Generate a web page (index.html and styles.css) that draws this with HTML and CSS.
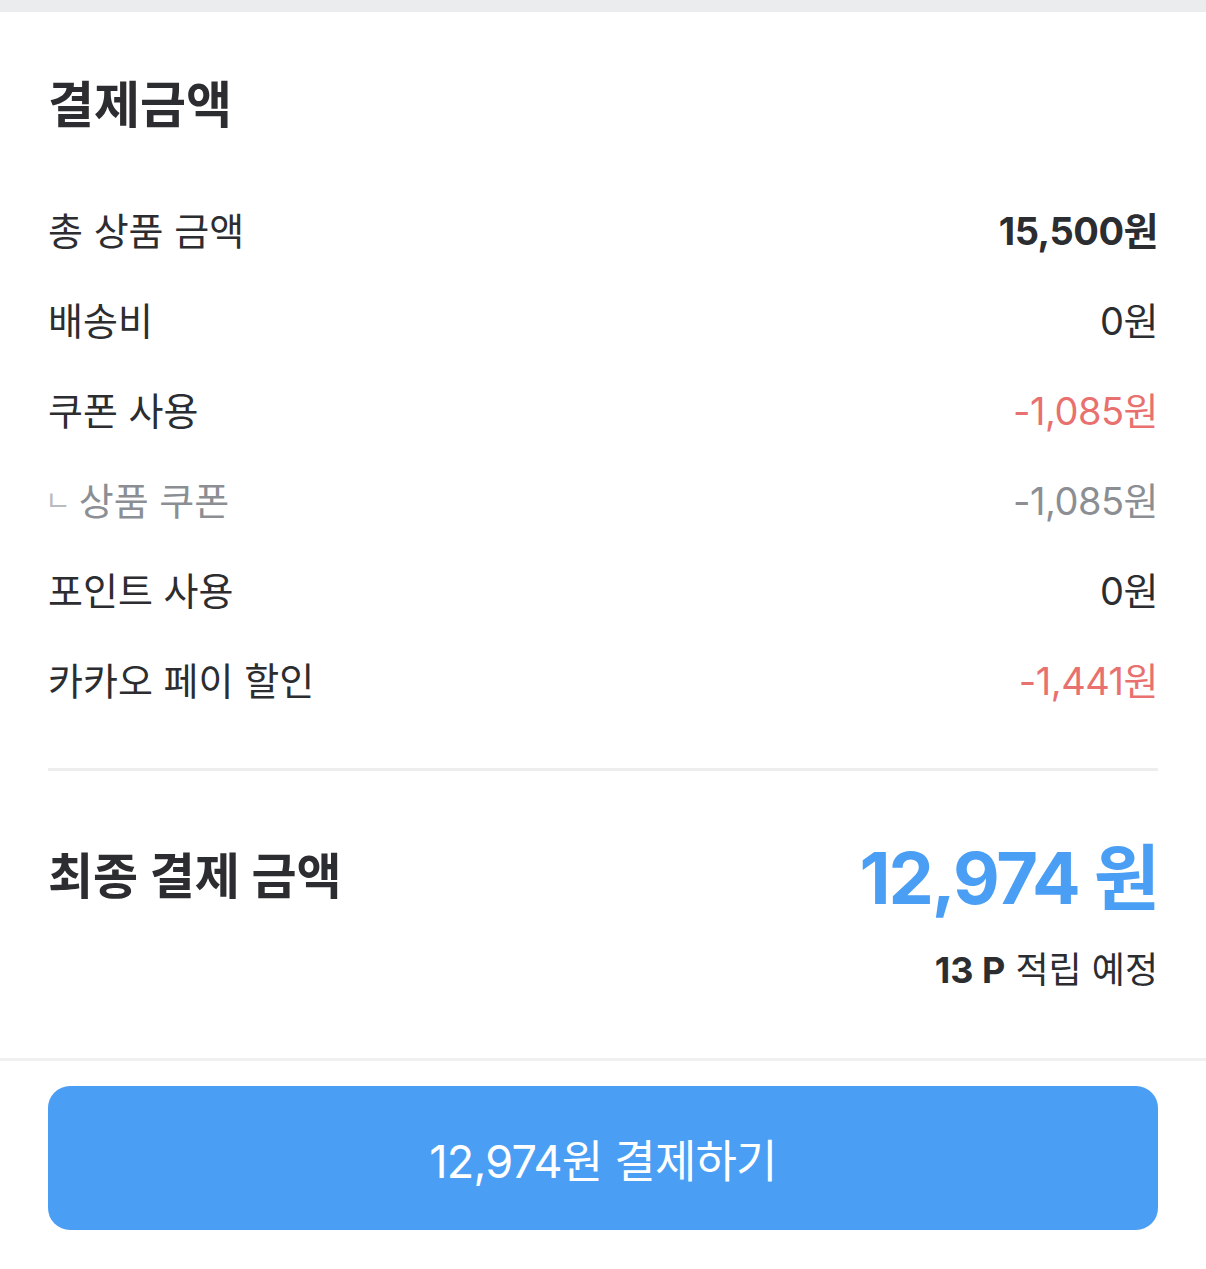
FILE: index.html
```html
<!DOCTYPE html>
<html lang="ko">
<head>
    <meta charset="UTF-8">
    <meta name="viewport" content="width=device-width, initial-scale=1.0">
    <title>결제금액</title>
    <link rel="stylesheet" href="styles.css">
</head>
<body>

    <div class="top-bar"></div>

    <div class="payment">
        <h2 class="payment-title">결제금액</h2>

        <div class="rows">
            <div class="row">
                <span class="label">총 상품 금액</span>
                <span class="value bold">15,500원</span>
            </div>
            <div class="row">
                <span class="label">배송비</span>
                <span class="value">0원</span>
            </div>
            <div class="row">
                <span class="label">쿠폰 사용</span>
                <span class="value minus">-1,085원</span>
            </div>
            <div class="row sub">
                <span class="label"><span class="corner">ㄴ</span>상품 쿠폰</span>
                <span class="value">-1,085원</span>
            </div>
            <div class="row">
                <span class="label">포인트 사용</span>
                <span class="value">0원</span>
            </div>
            <div class="row">
                <span class="label">카카오 페이 할인</span>
                <span class="value minus">-1,441원</span>
            </div>
        </div>

        <div class="divider"></div>

        <div class="total">
            <span class="total-label">최종 결제 금액</span>
            <span class="total-price">12,974 원</span>
        </div>
        <div class="points"><b>13 P</b> 적립 예정</div>
    </div>

    <div class="footer">
        <button type="button" class="pay-btn">12,974원 결제하기</button>
    </div>

</body>
</html>
```

FILE: styles.css
```css
body {
    margin: 0;
    background: #fff;
    font-family: "Inter", "Noto Sans CJK KR", sans-serif;
    color: #2c2d30;
}

.top-bar {
    height: 12px;
    background-color: #ebecee;
}

.payment {
    padding: 0 48px;
}

.payment-title {
    margin: 0;
    padding-top: 58px;
    height: 70px;
    line-height: 70px;
    font-size: 50px;
    font-weight: 700;
}

.rows {
    margin-top: 43px;
}

.row {
    display: flex;
    justify-content: space-between;
    align-items: center;
    height: 90px;
    font-size: 38px;
}

.row .value {
    letter-spacing: -0.5px;
}

.row .bold {
    font-weight: 700;
}

.row .minus {
    color: #e8716f;
}

.row.sub {
    color: #8b8e93;
}

.corner {
    font-size: 28px;
    color: #b9bbbf;
    margin-right: 8px;
    margin-left: -3px;
    vertical-align: 4px;
}

.divider {
    margin-top: 45px;
    height: 3px;
    background-color: #ededed;
}

.total {
    display: flex;
    justify-content: space-between;
    align-items: center;
    margin-top: 56px;
    height: 90px;
}

.total-label {
    font-size: 49px;
    font-weight: 700;
}

.total-price {
    font-size: 72px;
    font-weight: 700;
    color: #4a9ff5;
    letter-spacing: -2px;
}

.points {
    text-align: right;
    font-size: 36px;
    height: 52px;
    line-height: 52px;
    margin-top: 27px;
}

.points b {
    font-weight: 700;
}

.footer {
    margin-top: 62px;
    border-top: 3px solid #f0f0f0;
    padding: 25px 48px 0;
}

.pay-btn {
    display: block;
    width: 100%;
    height: 144px;
    border: none;
    border-radius: 22px;
    background-color: #4a9ff5;
    color: #fff;
    font-family: inherit;
    font-size: 45px;
    letter-spacing: -0.8px;
    cursor: pointer;
}
```
